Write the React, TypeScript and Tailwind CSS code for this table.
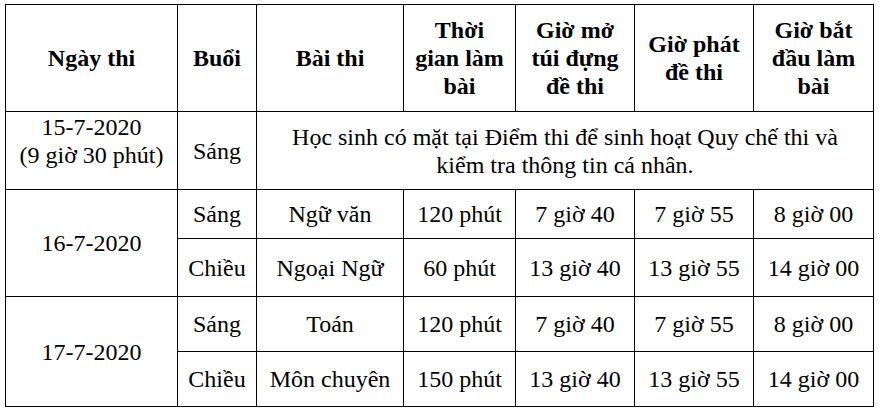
import React from "react";

const serifFont = { fontFamily: '"Liberation Serif", "Times New Roman", Times, serif' };

const cell =
  "bg-white flex items-center justify-center text-center text-black text-[24px] leading-[28px] font-['Liberation_Serif',serif]";
const head = `${cell} font-bold`;

const Cell: React.FC<{ className?: string; children: React.ReactNode }> = ({ className = cell, children }) => (
  <div className={className} style={serifFont}>
    {children}
  </div>
);

const App: React.FC = () => {
  return (
    <div
      className="bg-white w-[879px] h-[412px] pl-[5px] pt-[4px] font-['Liberation_Serif',serif]"
      style={serifFont}
    >
      <div className="grid w-[869px] bg-black p-px gap-px grid-cols-[171px_78px_146px_111px_118px_118px_119px] grid-rows-[106px_77px_48px_57px_54px_54px]">
        {/* header */}
        <Cell className={head}>Ngày thi</Cell>
        <Cell className={head}>Buổi</Cell>
        <Cell className={head}>Bài thi</Cell>
        <Cell className={head}>
          Thời
          <br />
          gian làm
          <br />
          bài
        </Cell>
        <Cell className={head}>
          Giờ mở
          <br />
          túi đựng
          <br />
          đề thi
        </Cell>
        <Cell className={head}>
          Giờ phát
          <br />
          đề thi
        </Cell>
        <Cell className={head}>
          Giờ bắt
          <br />
          đầu làm
          <br />
          bài
        </Cell>

        {/* 15-7 */}
        <Cell className="bg-white flex items-start justify-center text-center pt-[1px] text-black text-[24px] leading-[28px] font-['Liberation_Serif',serif]">
          <span>
            15-7-2020
            <br />
            (9 giờ 30 phút)
          </span>
        </Cell>
        <Cell>Sáng</Cell>
        <Cell className={`${cell} col-span-5`}>
          <span>
            Học sinh có mặt tại Điểm thi để sinh hoạt Quy chế thi và
            <br />
            kiểm tra thông tin cá nhân.
          </span>
        </Cell>

        {/* 16-7 */}
        <Cell className={`${cell} row-span-2`}>16-7-2020</Cell>
        <Cell>Sáng</Cell>
        <Cell>Ngữ văn</Cell>
        <Cell>120 phút</Cell>
        <Cell>7 giờ 40</Cell>
        <Cell>7 giờ 55</Cell>
        <Cell>8 giờ 00</Cell>
        <Cell>Chiều</Cell>
        <Cell>Ngoại Ngữ</Cell>
        <Cell>60 phút</Cell>
        <Cell>13 giờ 40</Cell>
        <Cell>13 giờ 55</Cell>
        <Cell>14 giờ 00</Cell>

        {/* 17-7 */}
        <Cell className={`${cell} row-span-2`}>17-7-2020</Cell>
        <Cell>Sáng</Cell>
        <Cell>Toán</Cell>
        <Cell>120 phút</Cell>
        <Cell>7 giờ 40</Cell>
        <Cell>7 giờ 55</Cell>
        <Cell>8 giờ 00</Cell>
        <Cell>Chiều</Cell>
        <Cell>Môn chuyên</Cell>
        <Cell>150 phút</Cell>
        <Cell>13 giờ 40</Cell>
        <Cell>13 giờ 55</Cell>
        <Cell>14 giờ 00</Cell>
      </div>
    </div>
  );
};

export default App;
